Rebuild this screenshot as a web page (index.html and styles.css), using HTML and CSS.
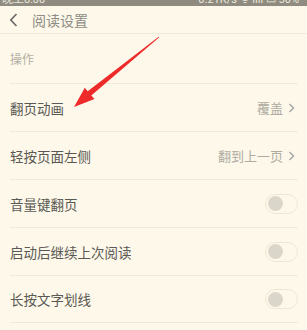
FILE: index.html
```
<!DOCTYPE html>
<html lang="zh">
<head>
<meta charset="utf-8">
<link rel="stylesheet" href="styles.css">
</head>
<body>
<div class="statusbar">
  <span class="sb-left">晚上8:00</span>
  <span class="sb-right">0.21K/s ᯤ ııll ▭ 50%</span>
</div>
<div class="header">
  <svg class="back" width="9" height="14" viewBox="0 0 9 14"><path d="M7.5 1 L1.8 7 L7.5 13" fill="none" stroke="#666" stroke-width="1.6"/></svg>
  <span class="title">阅读设置</span>
</div>
<div class="section">操作</div>
<div class="list">
  <div class="row"><span class="label">翻页动画</span><span class="value">覆盖<svg class="chev" width="7" height="10" viewBox="0 0 7 10"><path d="M1.5 1 L5.5 5 L1.5 9" fill="none" stroke="#aaa" stroke-width="1.6"/></svg></span></div>
  <div class="row"><span class="label">轻按页面左侧</span><span class="value">翻到上一页<svg class="chev" width="7" height="10" viewBox="0 0 7 10"><path d="M1.5 1 L5.5 5 L1.5 9" fill="none" stroke="#aaa" stroke-width="1.6"/></svg></span></div>
  <div class="row"><span class="label">音量键翻页</span><span class="toggle"><span class="knob"></span></span></div>
  <div class="row"><span class="label">启动后继续上次阅读</span><span class="toggle"><span class="knob"></span></span></div>
  <div class="row"><span class="label">长按文字划线</span><span class="toggle"><span class="knob"></span></span></div>
</div>
<svg class="arrow" width="307" height="330" viewBox="0 0 307 330">
  <path d="M159.3 37.3 L91.3 95.5 L94.5 99 L74 107 L84.8 87.8 L87.7 91.3 L158.7 36.7 Z" fill="#ee2b2b"/>
</svg>
</body>
</html>
```
FILE: styles.css
```
* { box-sizing: border-box; }
body {
  margin: 0;
  width: 307px;
  height: 330px;
  overflow: hidden;
  background: #fdf8e9;
  font-family: "Noto Sans CJK SC", "Noto Sans", sans-serif;
  position: relative;
}
.statusbar {
  height: 6px;
  background: #8f8b80;
  overflow: hidden;
  display: flex;
  justify-content: space-between;
  padding: 0 8px 0 2px;
  font-family: "Roboto", "Noto Sans CJK SC", sans-serif;
  font-size: 11px;
  line-height: 11px;
  color: #ece8dc;
}
.statusbar span { margin-top: -6px; }
.header {
  height: 28px;
  display: flex;
  align-items: center;
  padding-left: 9px;
  border-bottom: 1px solid #f1ebda;
}
.back { margin-right: 14px; }
.title {
  font-size: 14px;
  color: #8e8c86;
}
.section {
  height: 49px;
  display: flex;
  align-items: center;
  padding-left: 10px;
  font-size: 12px;
  color: #b3afa5;
}
.list {
  margin: 0 9px 0 10px;
}
.row {
  height: 48px;
  border-top: 1px solid #efe9d7;
  border-bottom: 0;
  display: flex;
  align-items: center;
  justify-content: space-between;
}
.row:last-child { border-bottom: 1px solid #efe9d7; }
.label {
  font-size: 13.5px;
  color: #5a5854;
}
.value {
  display: flex;
  align-items: center;
  font-size: 13px;
  color: #aeaba2;
}
.chev { margin-left: 5px; margin-right: 3px; }
.toggle {
  width: 33px;
  height: 20px;
  border: 1px solid #ece7d6;
  border-radius: 10px;
  display: flex;
  align-items: center;
  padding-left: 2px;
}
.knob {
  width: 15px;
  height: 15px;
  border-radius: 50%;
  background: #dad7ca;
}
.arrow {
  position: absolute;
  left: 0;
  top: 0;
  pointer-events: none;
}
```
